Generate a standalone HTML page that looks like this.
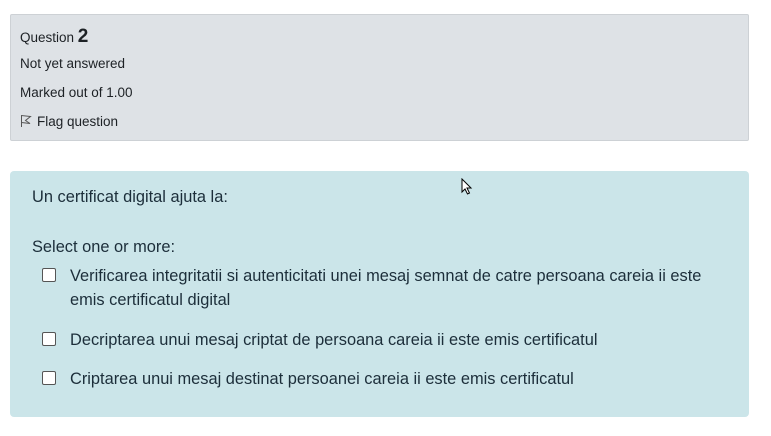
<!DOCTYPE html>
<html><head><style>
body{margin:0;background:#fff;width:771px;height:436px;position:relative;font-family:"Liberation Sans",sans-serif;overflow:hidden}
.info{position:absolute;left:10px;top:14px;width:737px;height:125px;background:#dee2e6;border:1px solid #cdd1d5;border-radius:2px;color:#1d2125}
.info div{position:absolute;left:9px;font-size:13.5px;white-space:nowrap}
.q{position:absolute;left:10px;top:171px;width:739px;height:246px;background:#cbe5e9;border-radius:4px;color:#1c2e3a}
.q div{position:absolute;white-space:nowrap;font-size:16.4px}
.cb{position:absolute;left:32px;width:12px;height:12px;border:1.5px solid #555;border-radius:2px;background:#fff}
</style></head><body>
<div class="info">
<div style="top:11px">Question <b style="font-size:19px">2</b></div>
<div style="top:41px">Not yet answered</div>
<div style="top:70px">Marked out of 1.00</div>
<div style="top:99px"><svg width="12" height="14" viewBox="0 0 12 14" style="vertical-align:-2px;margin-right:5px"><path d="M1.5 13V1.5L10.5 2.5L5.5 6.5L10 9.5L1.5 8.5" fill="none" stroke="#555" stroke-width="1"/></svg>Flag question</div>
</div>
<div class="q">
<div style="left:22px;top:17px">Un certificat digital ajuta la:</div>
<div style="left:22px;top:67px">Select one or more:</div>
<span class="cb" style="top:97px"></span>
<div style="left:60px;top:96px">Verificarea integritatii si autenticitati unei mesaj semnat de catre persoana careia ii este</div>
<div style="left:60px;top:120px">emis certificatul digital</div>
<span class="cb" style="top:161px"></span>
<div style="left:60px;top:160px">Decriptarea unui mesaj criptat de persoana careia ii este emis certificatul</div>
<span class="cb" style="top:200px"></span>
<div style="left:60px;top:199px">Criptarea unui mesaj destinat persoanei careia ii este emis certificatul</div>
</div>
<svg style="position:absolute;left:461px;top:178px" width="12" height="18" viewBox="0 0 12 18"><path d="M1 1V14L4 11L6.5 16L8.5 15L6 10H10Z" fill="#fff" stroke="#000" stroke-width="1"/></svg>
</body></html>
